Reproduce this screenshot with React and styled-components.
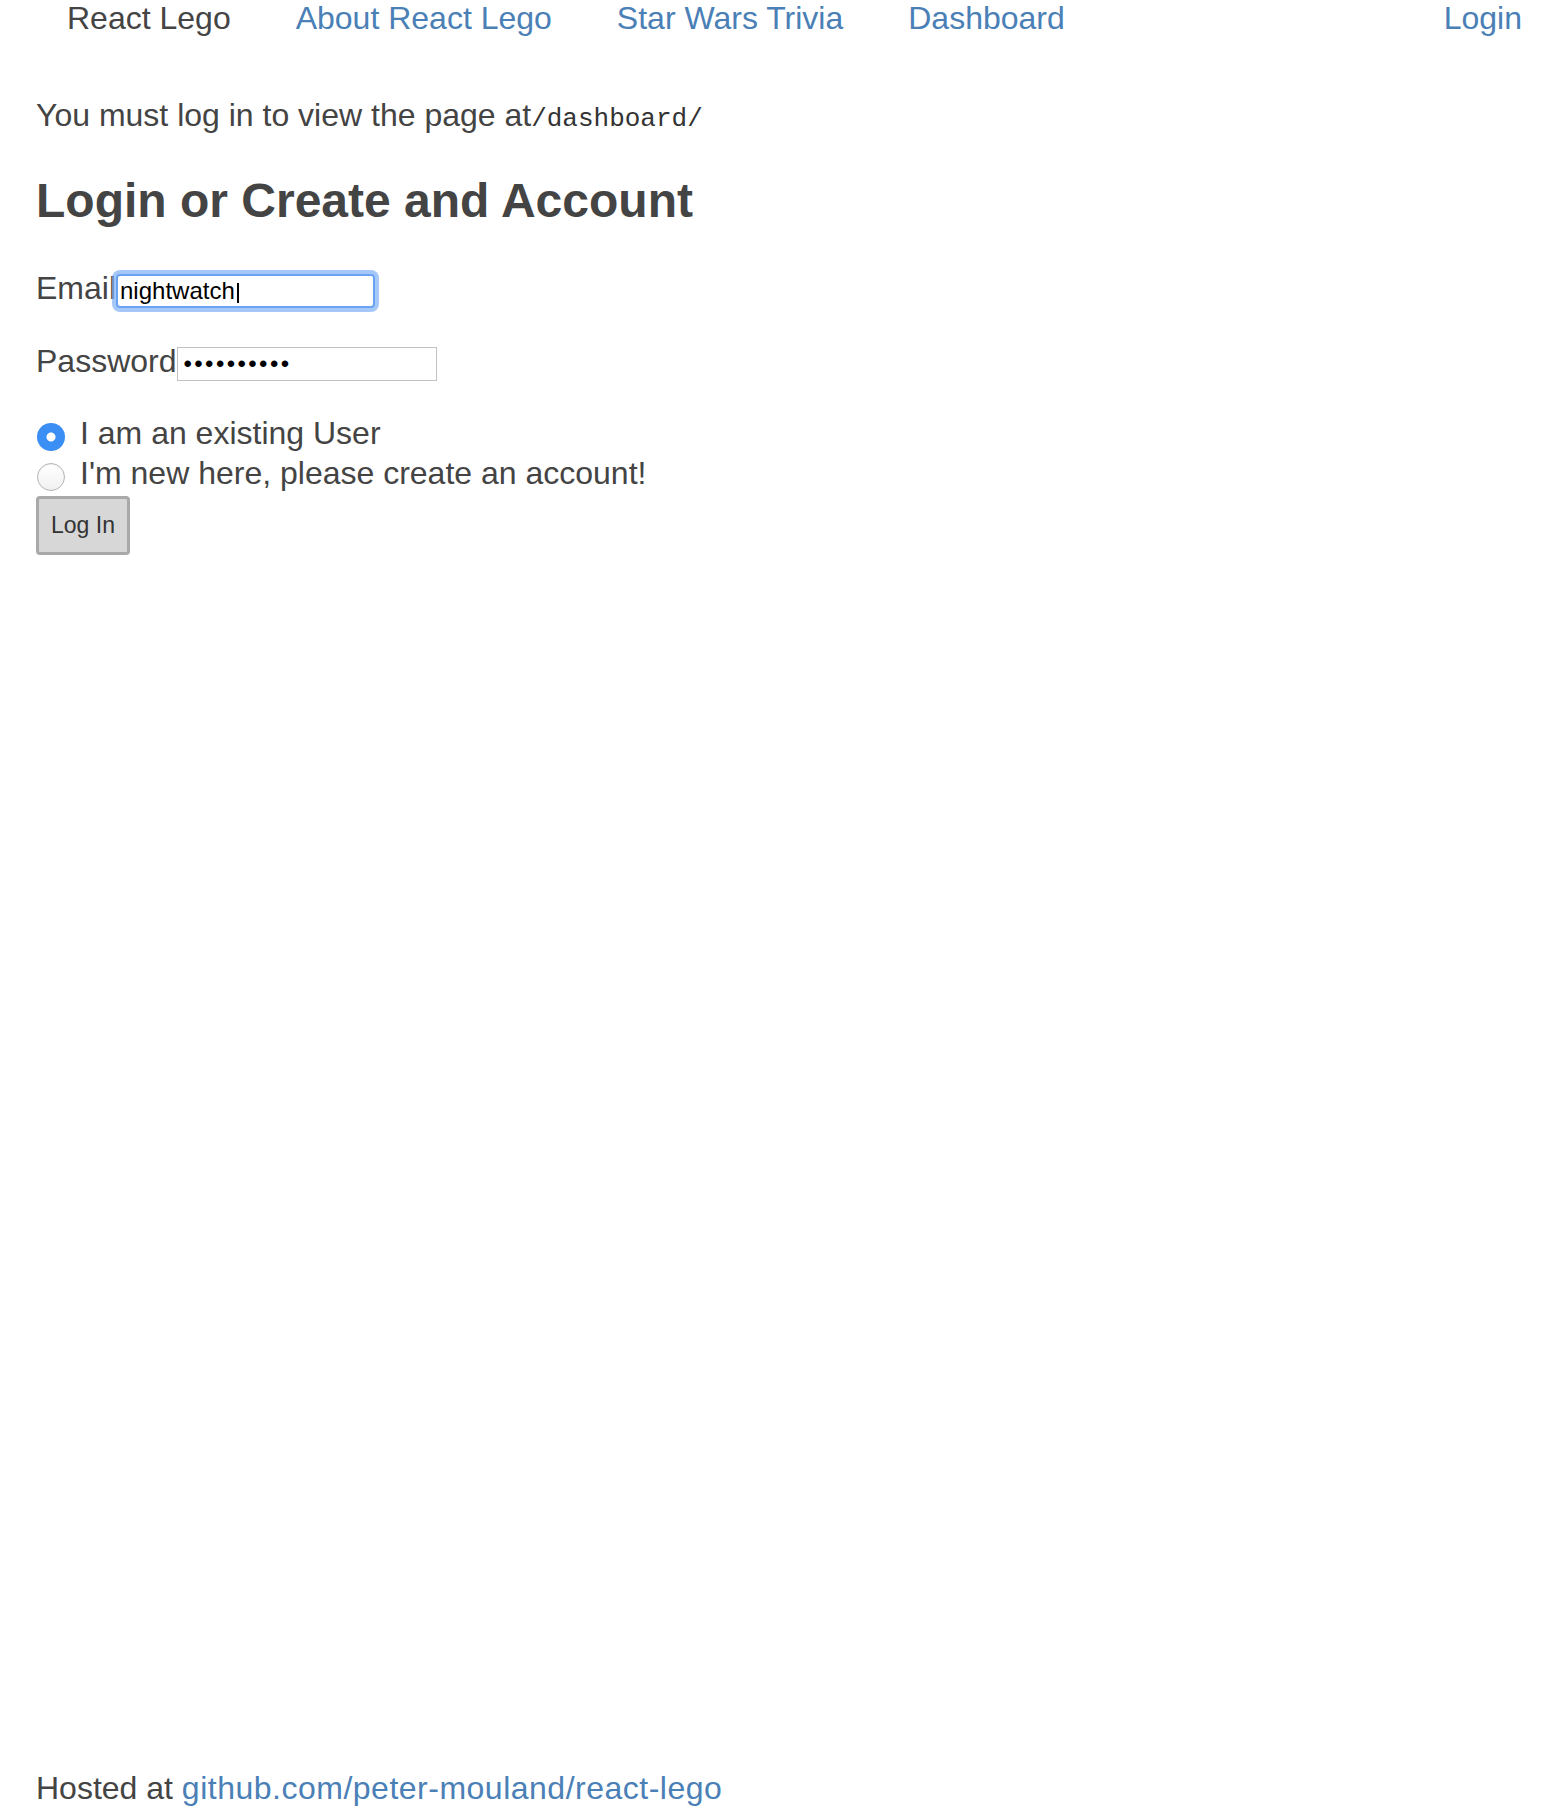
import React from 'react';
import styled, { createGlobalStyle } from 'styled-components';

const GlobalStyle = createGlobalStyle`
    html, body {
        margin: 0;
        padding: 0;
        background: #fff;
    }
    body {
        font-family: "Liberation Sans", Arial, Helvetica, sans-serif;
        color: #444;
    }
`

const Page = styled.div`
    display: flex;
    flex-direction: column;
    min-height: 1818px;
    box-sizing: border-box;
    padding-bottom: 8px;
`

const Nav = styled.nav`
    display: flex;
    align-items: center;
    gap: 65px;
    padding: 0 36px 0 67px;
    font-size: 32px;
    line-height: 36px;
`

const Brand = styled.span`
    color: #444;
`

const NavLink = styled.a`
    color: #4a80b6;
    text-decoration: none;
    margin-left: ${props => props.right ? 'auto' : '0'};
`

const Main = styled.main`
    padding: 0 36px;
`

const Notice = styled.p`
    margin: 57px 0 0;
    font-size: 32px;
    line-height: 44px;
`

const Code = styled.code`
    font-family: "Liberation Mono", "Courier New", monospace;
    font-size: 26px;
    color: #333;
`

const Heading = styled.h1`
    margin: 32px 0 0;
    font-size: 48px;
    line-height: 56px;
    font-weight: bold;
    color: #444;
`

const Form = styled.form`
    margin-top: 39px;
`

const Field = styled.div`
    display: flex;
    align-items: baseline;
    font-size: 32px;
    line-height: 40px;
    margin-bottom: ${props => props.last ? '32px' : '33px'};
`

const Label = styled.label`
    color: #444;
`

const InputWrap = styled.span`
    position: relative;
    display: inline-flex;
`

const TextInput = styled.input`
    box-sizing: border-box;
    width: ${props => props.wide ? '260px' : '259px'};
    height: 34px;
    margin: 0;
    padding: 1px 4px;
    font-family: "Liberation Sans", Arial, sans-serif;
    font-size: 24px;
    color: #000;
    background: #fff;
    outline: none;
    border-radius: ${props => props.focused ? '4px' : '0'};
    border: ${props => props.focused ? '2px solid #6aa3f3' : '1px solid #c2c2c2'};
    box-shadow: ${props => props.focused ? '0 0 0 4px rgba(128, 176, 247, 0.7)' : 'none'};
    letter-spacing: ${props => props.type === 'password' ? '2.4px' : 'normal'};
    padding-left: ${props => props.focused ? '2px' : '6px'};
`

const Caret = styled.span`
    position: absolute;
    left: 121px;
    top: 9px;
    width: 2px;
    height: 20px;
    background: #000;
    pointer-events: none;
`

const RadioGroup = styled.div`
    display: flex;
    flex-direction: column;
    font-size: 32px;
    line-height: 40px;
`

const RadioRow = styled.label`
    display: flex;
    align-items: center;
    color: #444;
`

const Radio = styled.input`
    appearance: none;
    -webkit-appearance: none;
    box-sizing: border-box;
    width: 28px;
    height: 28px;
    margin: 7px 15px 0 1px;
    border-radius: 50%;
    flex-shrink: 0;
    border: ${props => props.defaultChecked ? 'none' : '1px solid #b4b4b4'};
    background: ${props => props.defaultChecked
        ? 'radial-gradient(circle, #fff 0 4px, #3b8ef4 5px)'
        : 'linear-gradient(#fff, #f1f1f1)'};
    box-shadow: ${props => props.defaultChecked ? 'none' : 'inset 0 1px 1px rgba(0,0,0,0.06)'};
`

const Button = styled.button`
    box-sizing: border-box;
    width: 94px;
    height: 59px;
    margin-top: 3px;
    padding: 0;
    font-family: "Liberation Sans", Arial, sans-serif;
    font-size: 23px;
    color: #333;
    background: #d7d7d7;
    border: 3px solid #a9a9a9;
    border-radius: 4px;
`

const Footer = styled.footer`
    margin-top: auto;
    padding: 0 36px;
    font-size: 32px;
    line-height: 44px;
    color: #444;
`

const FooterLink = styled.a`
    color: #4a80b6;
    text-decoration: none;
    letter-spacing: 0.5px;
`

const App = () =>
    <Page>
        <GlobalStyle />
        <Nav>
            <Brand>React Lego</Brand>
            <NavLink href="#">About React Lego</NavLink>
            <NavLink href="#">Star Wars Trivia</NavLink>
            <NavLink href="#">Dashboard</NavLink>
            <NavLink href="#" right>Login</NavLink>
        </Nav>
        <Main>
            <Notice>You must log in to view the page at<Code>/dashboard/</Code></Notice>
            <Heading>Login or Create and Account</Heading>
            <Form onSubmit={e => e.preventDefault()}>
                <Field>
                    <Label htmlFor="email">Email</Label>
                    <InputWrap>
                        <TextInput id="email" type="text" defaultValue="nightwatch" focused />
                        <Caret />
                    </InputWrap>
                </Field>
                <Field last>
                    <Label htmlFor="password">Password</Label>
                    <TextInput id="password" type="password" defaultValue="nightwatch" wide />
                </Field>
                <RadioGroup>
                    <RadioRow>
                        <Radio type="radio" name="user" defaultChecked />
                        I am an existing User
                    </RadioRow>
                    <RadioRow>
                        <Radio type="radio" name="user" />
                        I'm new here, please create an account!
                    </RadioRow>
                </RadioGroup>
                <Button type="submit">Log In</Button>
            </Form>
        </Main>
        <Footer>
            Hosted at <FooterLink href="#">github.com/peter-mouland/react-lego</FooterLink>
        </Footer>
    </Page>

export default App;
